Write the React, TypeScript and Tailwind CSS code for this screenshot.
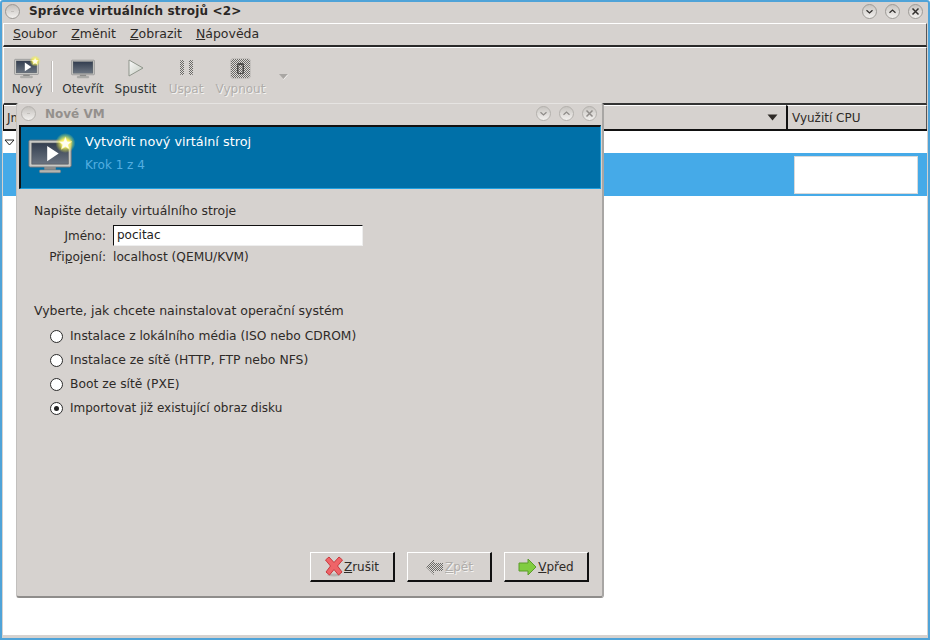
import React from "react";

function TitleBall({ size = 15, dim = false }: { size?: number; dim?: boolean }) {
  return (
    <div
      className={`rounded-full border ${dim ? "border-[#b5b2ae]" : "border-[#9a9793]"} bg-gradient-to-b from-[#c4c1bd] to-[#f2f0ee] flex items-center justify-center shrink-0`}
      style={{ width: size, height: size }}
    >
      <div className="w-[3px] h-[1px] bg-[#c2bfbb]" />
    </div>
  );
}

function WinBtn({ kind, dim = false }: { kind: "down" | "up" | "x"; dim?: boolean }) {
  const c = dim ? "#8f8c89" : "#33312f";
  return (
    <svg width="15" height="15" viewBox="0 0 15 15" className="shrink-0">
      <defs>
        <linearGradient id={`wb-${kind}-${dim ? 1 : 0}`} x1="0" y1="0" x2="0" y2="1">
          <stop offset="0" stopColor="#c6c3bf" />
          <stop offset="1" stopColor="#f4f2f0" />
        </linearGradient>
      </defs>
      <circle cx="7.5" cy="7.5" r="7" fill={`url(#wb-${kind}-${dim ? 1 : 0})`} stroke={dim ? "#b3b0ac" : "#9d9a96"} />
      {kind === "down" && <path d="M4.5 6.3 L7.5 9 L10.5 6.3" fill="none" stroke={c} strokeWidth="1.3" />}
      {kind === "up" && <path d="M4.5 8.7 L7.5 6 L10.5 8.7" fill="none" stroke={c} strokeWidth="1.3" />}
      {kind === "x" && <path d="M4.5 4.5 L10.5 10.5 M10.5 4.5 L4.5 10.5" fill="none" stroke={c} strokeWidth="1.5" />}
    </svg>
  );
}

function Monitor({ w, h, play = false, star = false, id }: { w: number; h: number; play?: boolean; star?: boolean; id: string }) {
  return (
    <svg width={w} height={h} viewBox="0 0 48 40" className="shrink-0 overflow-visible">
      <defs>
        <linearGradient id={`${id}s`} x1="0" y1="0" x2="0" y2="1">
          <stop offset="0" stopColor="#333e50" />
          <stop offset="1" stopColor="#6b7480" />
        </linearGradient>
        <radialGradient id={`${id}g`}>
          <stop offset="0.35" stopColor="#fff45c" stopOpacity="1" />
          <stop offset="1" stopColor="#e8f04a" stopOpacity="0" />
        </radialGradient>
      </defs>
      <rect x="1" y="4" width="44" height="28" rx="1.5" fill="#c9c9c5" stroke="#77777a" />
      <rect x="4" y="7" width="38" height="22" fill={`url(#${id}s)`} stroke="#4b4f55" strokeWidth="0.6" />
      <rect x="17" y="32" width="12" height="3" fill="#8d8d8b" />
      <rect x="12" y="35" width="22" height="3" rx="1" fill="#b5b5b1" stroke="#7f7f7d" strokeWidth="0.6" />
      {play && <path d="M20 10 L32 18 L20 26 Z" fill="#fff" />}
      {star && (
        <g transform="translate(0 -2)">
          <circle cx="39" cy="9" r="10.5" fill={`url(#${id}g)`} />
          <path d="M39 2.5 L41 7 L45.8 7.5 L42.2 10.7 L43.2 15.5 L39 13 L34.8 15.5 L35.8 10.7 L32.2 7.5 L37 7 Z" fill="#fffdf0" stroke="#f2ea60" strokeWidth="0.5" />
        </g>
      )}
    </svg>
  );
}

function Dither({ id }: { id: string }) {
  return (
    <defs>
      <pattern id={id} width="2" height="2" patternUnits="userSpaceOnUse">
        <rect width="2" height="2" fill="#dcdad7" />
        <rect width="1" height="1" fill="#6b6966" />
        <rect x="1" y="1" width="1" height="1" fill="#6b6966" />
      </pattern>
    </defs>
  );
}

function ToolItem({ label, disabled = false, className = "", children }: { label: string; disabled?: boolean; className?: string; children: React.ReactNode }) {
  return (
    <div className={`flex flex-col items-center ${className}`}>
      <div className="h-[24px] flex items-center justify-center">{children}</div>
      <div className={`mt-[2px] leading-[15px] whitespace-nowrap ${disabled ? "text-[#b0adaa] [text-shadow:1px_1px_0_#f4f3f1]" : "text-[#2e3436]"}`}>{label}</div>
    </div>
  );
}

function Radio({ label, checked = false, size = "text-[12.3px]" }: { label: string; checked?: boolean; size?: string }) {
  return (
    <div className="h-[24px] flex items-center pl-[16px]">
      <div className="w-[13px] h-[13px] rounded-full border border-[#2a2a2a] bg-white flex items-center justify-center mr-[7px] shrink-0">
        {checked && <div className="w-[5px] h-[5px] rounded-full bg-[#222]" />}
      </div>
      <span className={`text-[#2e2a27] ${size}`}>{label}</span>
    </div>
  );
}

function DlgButton({ icon, children, disabled = false }: { icon: React.ReactNode; children: React.ReactNode; disabled?: boolean }) {
  return (
    <div className={`w-[85px] h-[30px] flex items-center justify-center gap-[1px] border border-t-white border-l-white border-r-[#111] border-b-[#111] border-b-2 border-r-2 ${disabled ? "text-[#b0adaa] [text-shadow:1px_1px_0_#f4f3f1]" : "text-[#2e2a27]"}`}>
      {icon}
      <span>{children}</span>
    </div>
  );
}

export default function App() {
  return (
    <div className="relative w-[930px] h-[640px] overflow-hidden bg-[#d6d2cf] font-['DejaVu_Sans',sans-serif] text-[12px] text-[#2e2a27] border-2 border-[#4fa3d8] rounded-t-[3px]">
      {/* Title bar */}
      <div className="h-[21px] flex items-center pl-[3px] pr-[5px] pb-[3px]">
        <TitleBall />
        <div className="ml-[9px] font-bold text-[12px] tracking-[0.16px] text-[#2a2725]">Správce virtuálních strojů &lt;2&gt;</div>
        <div className="ml-auto flex gap-[8px]">
          <WinBtn kind="down" />
          <WinBtn kind="up" />
          <WinBtn kind="x" />
        </div>
      </div>

      <div className="ml-[1px] mr-[1px] h-[612px] flex flex-col">
        {/* Menu */}
        <div className="h-[24px] flex items-center border-t border-t-white border-l border-l-white border-b-2 border-b-[#2a2a2a] pl-[9px] gap-[14px] border-r border-r-[#555] text-[12.5px]">
          <span><u>S</u>oubor</span>
          <span><u>Z</u>měnit</span>
          <span><u>Z</u>obrazit</span>
          <span><u>N</u>ápověda</span>
        </div>
        {/* Toolbar */}
        <div className="h-[58px] flex items-start border-t border-t-white border-l border-l-white border-b-2 border-b-[#333] border-r border-r-[#555] pl-[4px] pt-[8px] text-[12px]">
          <ToolItem label="Nový" className="w-[38px]">
            <Monitor w={26} h={22} play star id="a" />
          </ToolItem>
          <div className="w-[2px] h-[31px] bg-white ml-[5px] mt-[5px] border-l border-l-[#bdb9b6]" />
          <ToolItem label="Otevřít" className="w-[40px] ml-[10px]">
            <Monitor w={25} h={21} id="b" />
          </ToolItem>
          <ToolItem label="Spustit" className="w-[43px] ml-[11px]">
            <svg width="18" height="20" viewBox="0 0 18 20">
              <defs>
                <linearGradient id="pl" x1="0" y1="0" x2="1" y2="1">
                  <stop offset="0" stopColor="#fafafa" />
                  <stop offset="1" stopColor="#c5cbc0" />
                </linearGradient>
              </defs>
              <path d="M2 2 L16 10 L2 18 Z" fill="url(#pl)" stroke="#8f958b" />
            </svg>
          </ToolItem>
          <ToolItem label="Uspat" disabled className="w-[36px] ml-[11px]">
            <svg width="15" height="18" viewBox="0 0 15 18">
              <Dither id="d1" />
              <rect x="1" y="1" width="4" height="15" rx="1" fill="url(#d1)" />
              <rect x="10" y="1" width="4" height="15" rx="1" fill="url(#d1)" />
            </svg>
          </ToolItem>
          <ToolItem label="Vypnout" disabled className="w-[51px] ml-[11px]">
            <svg width="21" height="21" viewBox="0 0 21 21">
              <Dither id="d2" />
              <rect x="0.5" y="0.5" width="20" height="20" rx="3" fill="url(#d2)" stroke="#c4c1be" />
              <rect x="7" y="5" width="7" height="11" rx="2" fill="#4b4a48" />
              <rect x="8.5" y="7" width="4" height="8" fill="url(#d2)" />
            </svg>
          </ToolItem>
          <svg width="11" height="7" viewBox="0 0 11 7" className="ml-[12px] mt-[17px]">
            <path d="M1 1 L10 1 L5.5 6 Z" fill="#a9a6a3" />
            <path d="M10 1.5 L5.5 6.5" stroke="#f2f1ef" fill="none" />
          </svg>
        </div>
        {/* Table header */}
        <div className="h-[26px] flex border-b-2 border-b-[#111] border-l border-l-[#111]">
          <div className="flex-1 flex items-center pl-[3px] border-t border-t-white">
            <span>Jm</span>
            <svg width="11" height="7" viewBox="0 0 11 7" className="ml-auto mr-[8px]">
              <path d="M0.5 0.5 L10.5 0.5 L5.5 6.5 Z" fill="#2e2a27" />
            </svg>
          </div>
          <div className="w-[141px] flex items-center pl-[4px] border-l-2 border-l-[#111] border-t border-t-white border-r border-r-[#555] text-[12px]">
            Využití CPU
          </div>
        </div>
        {/* Table body */}
        <div className="flex-1 bg-white flex flex-col">
          <div className="h-[22px] flex items-center pl-[1px]">
            <svg width="11" height="7" viewBox="0 0 11 7">
              <path d="M1 1 L10 1 L5.5 6 Z" fill="#fff" stroke="#222" />
            </svg>
          </div>
          <div className="h-[43px] bg-[#45aae8] flex items-center justify-end pr-[9px]">
            <div className="w-[124px] h-[38px] bg-white border border-[#d9d9d9]" />
          </div>
        </div>
      </div>

      {/* Dialog window */}
      <div className="absolute left-[14px] top-[101px] w-[588px] h-[495px] bg-[#d6d2cf] border border-[#aaa8a6] border-t-[#e6e4e2] border-l-[#c2c0be] border-b-2 border-b-[#8f8d8b] border-r-2 border-r-[#a8a6a4] rounded-[3px] flex flex-col">
        <div className="h-[21px] flex items-center pl-[4px] pr-[5px] pb-[2px]">
          <TitleBall dim />
          <div className="ml-[9px] font-bold text-[#94908d] text-[12px]">Nové VM</div>
          <div className="ml-auto flex gap-[8px]">
            <WinBtn kind="down" dim />
            <WinBtn kind="up" dim />
            <WinBtn kind="x" dim />
          </div>
        </div>
        {/* Banner */}
        <div className="ml-[2px] mr-[1px] h-[64px] bg-[#0070a8] border-t-2 border-l-2 border-t-[#111] border-l-[#111] border-r border-b border-r-[#1fa0e0] border-b-[#1fa0e0] flex">
          <div className="pl-[7px] pt-[9px]">
            <Monitor w={46} h={39} play star id="c" />
          </div>
          <div className="ml-[11px] flex flex-col">
            <div className="text-[12.8px] text-white leading-[17px] mt-[6px]">Vytvořit nový virtální stroj</div>
            <div className="text-[#53aee0] text-[12px] leading-[15px] mt-[8px]">Krok 1 z 4</div>
          </div>
        </div>
        {/* Content */}
        <div className="flex-1 flex flex-col pl-[17px] pt-[14px]">
          <div className="leading-[15px] text-[12.4px]">Napište detaily virtuálního stroje</div>
          <div className="flex items-center h-[21px] mt-[7px]">
            <div className="w-[72px] text-right mr-[7px]"><u>J</u>méno:</div>
            <div className="w-[250px] h-[21px] bg-white border border-[#eeeeee] border-t-[#111] border-l-[#111] pl-[3px] leading-[18px] text-[#222]">pocitac</div>
          </div>
          <div className="flex items-center h-[22px] text-[12.2px]">
            <div className="w-[72px] text-right mr-[7px]">Při<u>p</u>ojení:</div>
            <div>localhost (QEMU/KVM)</div>
          </div>
          <div className="leading-[15px] mt-[35px] text-[12.5px]">Vyberte, jak chcete nainstalovat operační systém</div>
          <div className="mt-[6px] flex flex-col">
            <Radio label="Instalace z lokálního média (ISO nebo CDROM)" size="text-[12.25px]" />
            <Radio label="Instalace ze sítě (HTTP, FTP nebo NFS)" size="text-[12.4px]" />
            <Radio label="Boot ze sítě (PXE)" size="text-[12.3px]" />
            <Radio label="Importovat již existující obraz disku" checked size="text-[12px]" />
          </div>
        </div>
        {/* Buttons */}
        <div className="flex justify-end gap-[12px] pr-[13px] pb-[14px]">
          <DlgButton
            icon={
              <svg width="18" height="21" viewBox="0 0 18 21">
                <ellipse cx="9" cy="19" rx="7" ry="1.5" fill="#b9b5b2" />
                <path d="M4 1 L9 6.5 L14 1 L17.5 4 L12.5 10 L17 16 L13.5 19 L9 13.5 L4.5 19 L1 16 L5.5 10 L0.5 4 Z" fill="#ef6468" stroke="#c9383c" />
              </svg>
            }
          >
            <u>Z</u>rušit
          </DlgButton>
          <DlgButton
            disabled
            icon={
              <svg width="19" height="18" viewBox="0 0 19 18">
                <Dither id="d3" />
                <path d="M1 9 L9 1 L9 5 L18 5 L18 13 L9 13 L9 17 Z" fill="url(#d3)" />
              </svg>
            }
          >
            <u>Z</u>pět
          </DlgButton>
          <DlgButton
            icon={
              <svg width="19" height="18" viewBox="0 0 19 18">
                <path d="M18 9 L10 1 L10 5 L1 5 L1 13 L10 13 L10 17 Z" fill="#80cc40" stroke="#5c9c2a" />
              </svg>
            }
          >
            <u>V</u>před
          </DlgButton>
        </div>
      </div>
    </div>
  );
}
